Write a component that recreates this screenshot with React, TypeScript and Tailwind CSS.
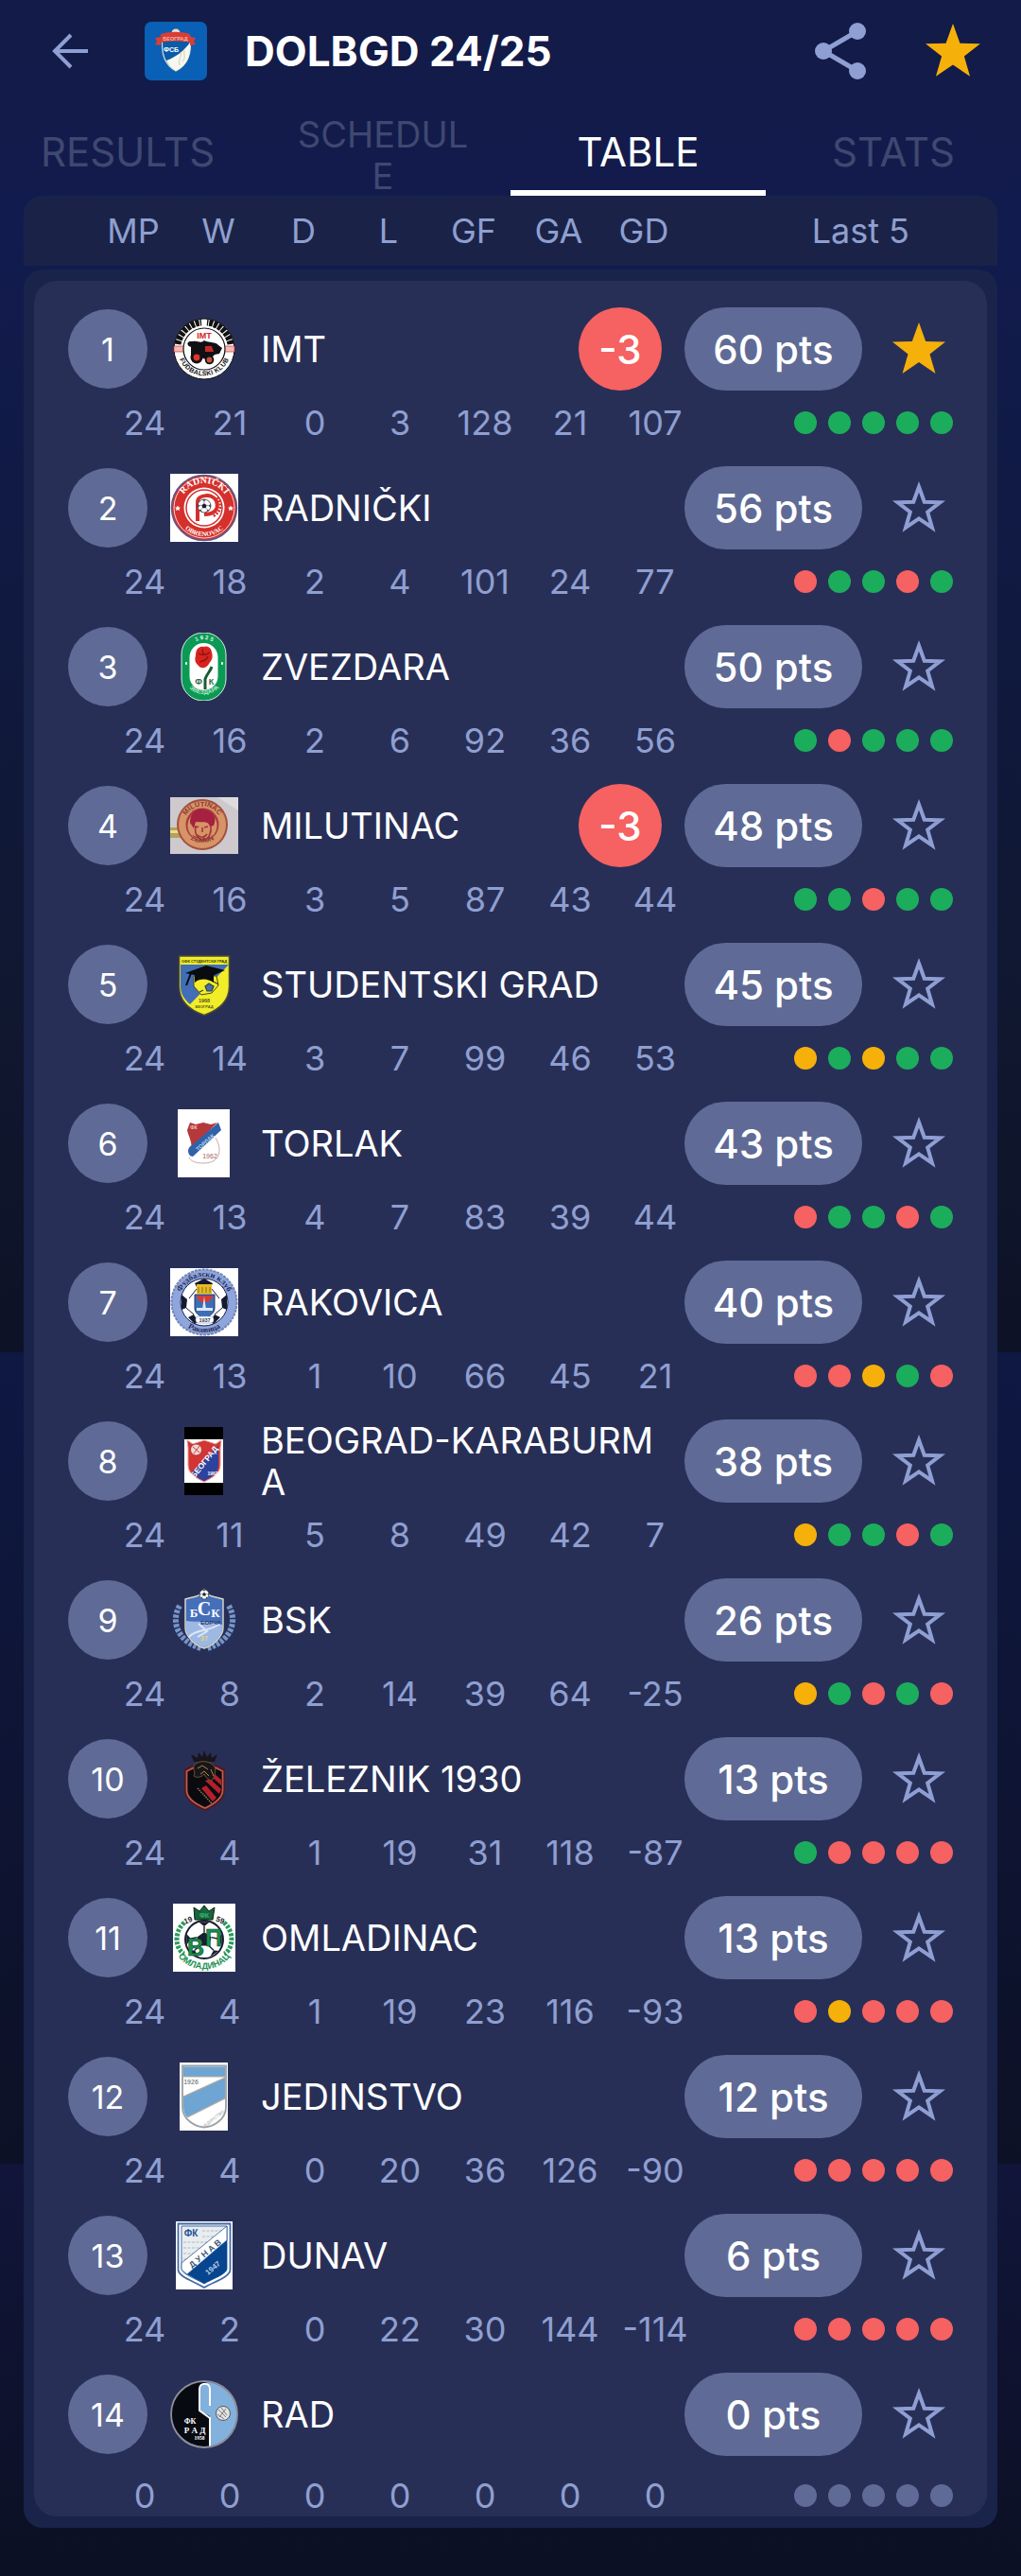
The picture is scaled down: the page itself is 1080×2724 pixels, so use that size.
import { ReactNode, useState } from "react";
import clsx from "clsx";

type Result = "W" | "D" | "L" | "-";

type Team = {
  name: string;
  points: number;
  penalty?: string;
  stats: number[];
  form: Result[];
  crest: ReactNode;
};

const STAR =
  "M30 2 L37.2 22 L58 22.6 L41.5 35.4 L47.5 56 L30 44 L12.5 56 L18.5 35.4 L2 22.6 L22.8 22 Z";

function Crest({ children }: { children: ReactNode }) {
  return (
    <svg viewBox="0 0 72 72" className="size-[72px] shrink-0" fontFamily="Liberation Sans, sans-serif" fontWeight="bold" textAnchor="middle" aria-hidden="true">
      {children}
    </svg>
  );
}

function Ball({ cx, cy, r }: { cx: number; cy: number; r: number }) {
  return (
    <g transform={`translate(${cx} ${cy}) scale(${r / 10})`}>
      <circle r="10" fill="#fff" stroke="#1b1d2e" strokeWidth="1" />
      <path d="M0-4 3.8-1.2 2.4 3.2-2.4 3.2-3.8-1.2Z M-3-9.4H3L0-7Z M9.4-3 9.4 3 7-.5Z M-9.4-3-9.4 3-7-.5Z M3 9.3 7.6 6 5 5.6Z M-3 9.3-7.6 6-5 5.6Z" fill="#1b1d2e" />
      <path d="M0-4V-7M3.8-1.2 7-.5M-3.8-1.2-7-.5M2.4 3.2 5 5.6M-2.4 3.2-5 5.6" stroke="#1b1d2e" strokeWidth=".7" />
    </g>
  );
}

const crests = {
  imt: (
    <Crest>
      <defs>
        <path id="imt-ring" d="M9.5 36a26.5 26.5 0 0 0 53 0" />
      </defs>
      <circle cx="36" cy="36" r="32" fill="#fff" stroke="#111" />
      <path d="M8 31A28 28 0 0 1 33 8" stroke="#111" strokeWidth="7" strokeDasharray="4 1" fill="none" />
      <path d="M64 31A28 28 0 0 0 39 8" stroke="#111" strokeWidth="7" strokeDasharray="4 1" fill="none" />
      <path d="M4 33h11v6H4zM57 33h11v6H57z" fill="#f3b9b4" stroke="#c33" strokeWidth=".7" />
      <circle cx="36" cy="36" r="22" fill="#fff" stroke="#111" strokeWidth="1.2" />
      <text x="36" y="25" fontSize="9" fill="#d92520">IMT</text>
      <path d="M22 34c-4-2-4-6 2-6 6-1 8 3 12-1 6 3 12 1 15 5l4 3-3 6-5 1-6 6-9-3-10-1z" fill="#101014" />
      <path d="M21 33c-4-3-1-5 3-4s6 3 10 0" stroke="#101014" strokeWidth="1.5" fill="none" />
      <path d="M37 33h7l2 6h-9z" fill="#c22b25" />
      <circle cx="28" cy="45" r="6.5" fill="#111" />
      <circle cx="28" cy="45" r="3.4" fill="#e2332d" />
      <circle cx="41.5" cy="47.5" r="4.8" fill="#111" />
      <circle cx="41.5" cy="47.5" r="2.9" fill="#c9533b" />
      <text fontSize="7" fill="#111">
        <textPath href="#imt-ring" startOffset="50%" dominantBaseline="middle">FUDBALSKI KLUB</textPath>
      </text>
    </Crest>
  ),
  radnicki: (
    <Crest>
      <defs>
        <path id="rad-top" d="M10 36a26 26 0 0 1 52 0" />
        <path id="rad-bot" d="M6 36a30 30 0 0 0 60 0" />
      </defs>
      <path d="M0 0h72v72H0z" fill="#fff" />
      <circle cx="36" cy="36" r="34.5" fill="#d5302c" stroke="#5a5a8c" strokeWidth="1.5" />
      <circle cx="36" cy="36" r="32" fill="none" stroke="#fff" strokeWidth=".8" />
      <circle cx="36" cy="36" r="21.5" fill="#fff" />
      <circle cx="36" cy="36" r="19" fill="none" stroke="#d5302c" strokeWidth="1.5" />
      <text fontSize="10" fill="#fff" fontFamily="Liberation Serif, serif">
        <textPath href="#rad-top" startOffset="50%">RADNIČKI</textPath>
      </text>
      <text fontSize="7" fill="#fff" fontFamily="Liberation Serif, serif">
        <textPath href="#rad-bot" startOffset="50%">OBRENOVAC</textPath>
      </text>
      <path d="M29 50V30c0-8 16-10 20-1 3 9-3 14-13 14" fill="none" stroke="#d5302c" strokeWidth="4" />
      <path d="M50 25c5 7 4 16-5 20" fill="none" stroke="#d5302c" strokeWidth="3" strokeDasharray="2 1.5" />
      <Ball cx={36} cy={34} r={7} />
      <path d="M8 33.5l1 2h2l-1.5 1.500.5 2-2-1-2 1 .5-2L5 35.500h2zM64 33.500l1 2h2l-1.500 1.500.5 2-2-1-2 1 .5-2-1.500-1.500h2z" fill="#fff" />
    </Crest>
  ),
  zvezdara: (
    <Crest>
      <defs>
        <path id="zv-top" d="M19 24a17 17 0 0 1 34 0" />
        <path id="zv-bot" d="M15 44c0 28 42 28 42 0" />
      </defs>
      <rect x="12" y="0" width="47" height="72" rx="23" fill="#0b9a54" stroke="#d8efe2" />
      <rect x="20.5" y="11" width="30" height="50" rx="15" fill="#fff" />
      <text fontSize="6" fill="#dff3e6"><textPath href="#zv-top" startOffset="50%">1 9 2 5</textPath></text>
      <text fontSize="6.5" fill="#b9e6cb"><textPath href="#zv-bot" startOffset="50%">ЗВЕЗДАРА</textPath></text>
      <path d="M17 32v1M55 32v1" stroke="#fff" strokeWidth="2" strokeLinecap="round" />
      <path d="M37 60V49c2-6 5-7 7-13" stroke="#1c5b33" strokeWidth="3" fill="none" />
      <path d="M27 24c0-8 5-10 9-9 5-2 8 3 8 6 2 6-1 9-3 12-4 6-9 5-12 1-3-3-3-6-2-10z" fill="#d8231f" />
      <path d="M30 22c5 3 9 1 12-1M31 31c4-1 8-2 9-6M35 17c-2 3-1 5 2 7" stroke="#8d1512" fill="none" strokeWidth="1.2" />
      <text x="30" y="55" fontSize="9" fill="#33684a">Ф</text>
      <text x="43.5" y="55" fontSize="9" fill="#33684a">К</text>
    </Crest>
  ),
  milutinac: (
    <Crest>
      <defs>
        <path id="mi-top" d="M14.500 35a19.500 19.500 0 0 1 39 0" />
        <path id="mi-bot" d="M9.5 34a25 25 0 0 0 49 0" />
      </defs>
      <path d="M0 6h72v60H0z" fill="#cdc9cd" />
      <path d="M0 6h72v14L50 6z" fill="#dedbde" />
      <path d="M0 38h12v11H0z" fill="#b5a25b" />
      <path d="M0 41h12v3H0z" fill="#e6dc94" />
      <circle cx="34" cy="35" r="27" fill="#a4503f" />
      <circle cx="34" cy="35" r="25" fill="#d79467" />
      <circle cx="34" cy="35" r="17.5" fill="#a63a3e" />
      <circle cx="34" cy="36" r="15.5" fill="#d79467" />
      <path d="M21 33c0-12 9-16 15-14 9 1 14 9 10 17l-4 1c-2-7-7-4-15-5l-2 7z" fill="#a5213f" />
      <path d="M27 38l3-1M36 38l4-1M34 38v5M29 46c4 4 8 2 10-1M27 36c-2 9 3 15 8 15 6 0 9-8 8-15" stroke="#a5323c" strokeWidth="1.6" fill="none" />
      <text fontSize="7.5" fill="#8e3b37"><textPath href="#mi-top" startOffset="50%">MILUTINAC</textPath></text>
      <text fontSize="7.5" fill="#8e3b37"><textPath href="#mi-bot" startOffset="50%">ZEMUN</textPath></text>
    </Crest>
  ),
  studentski: (
    <Crest>
      <path d="M9.5 6h53v32c0 17-14 26-26.5 30.5C23 64 9.500 55 9.500 38z" fill="#f1ed29" stroke="#4b4d36" strokeWidth="1.5" />
      <path d="M11 15h51L21 57c-7-6-10-12-10-19z" fill="#416eb6" />
      <path d="M11 7h50v7H11z" fill="#f1ed29" />
      <text x="36" y="12.5" fontSize="4" fill="#33331b">ОФК СТУДЕНТСКИ ГРАД</text>
      <path d="M25 27h24l2 10-7 8-11 2-8-9z" fill="#f1ed29" stroke="#46491e" />
      <path d="M37 38l4-3 5 3-2 5h-5zM46 33l5 3M31 44l4-2" stroke="#35423b" strokeWidth="1.2" fill="#416eb6" />
      <path d="M16 24l22-8 20 5-18 8z" fill="#0a0b0e" />
      <path d="M26 26v8c6-5 14-4 20 0v-8z" fill="#0a0b0e" />
      <path d="M22 24l-5 13" stroke="#0a0b0e" strokeWidth="2" />
      <text x="36" y="55" fontSize="5.5" fill="#595a1a">1968</text>
      <text x="36" y="61" fontSize="4" fill="#595a1a">БЕОГРАД</text>
    </Crest>
  ),
  torlak: (
    <Crest>
      <path d="M8 0h55v72H8z" fill="#fff" />
      <path d="M48 30c7 12 6 27-13 27-8 0-13-2-15-6" fill="#fff" stroke="#c9a8a4" />
      <path d="M21 14l6 2 8-2 8 2 7-2-28 28c2-7-3-14-4-20z" fill="#b5393a" />
      <path d="M51 14l3 8L24 50c-3 0-5-3-5-6 0-3 2-5 4-6z" fill="#2f62a9" />
      <text x="25" y="21" fontSize="5" fill="#f0c9c5">ФК</text>
      <text x="37" y="37" fontSize="6" fill="#b9d0ed" transform="rotate(-42 37 35)">ТОРЛАК</text>
      <text x="42" y="52" fontSize="7" fill="#a7605c" fontWeight="normal">1962</text>
    </Crest>
  ),
  rakovica: (
    <Crest>
      <defs>
        <path id="ra-top" d="M9 36a27 27 0 0 1 54 0" />
        <path id="ra-bot" d="M4 36a32 32 0 0 0 64 0" />
      </defs>
      <path d="M0 0h72v72H0z" fill="#fff" />
      <circle cx="36" cy="36" r="34.5" fill="#8fa5dd" stroke="#7285b6" strokeWidth="2" strokeDasharray="3 1" />
      <circle cx="36" cy="36" r="25" fill="#fff" stroke="#1c2344" />
      <path d="M36 11l9 5-3 6H29l-3-6zM12 28l6 5-1 9-5 2zM60 28l-6 5 1 9 5 2zM19 52l6-3 5 8-4 2zM53 52l-6-3-5 8 4 2z" fill="#141a33" />
      <path d="M20 32l8-10M52 32l-8-10M17 42l8 7M55 42l-8 7" stroke="#141a33" />
      <text fontSize="8.5" fill="#252d58" fontFamily="Liberation Serif, serif"><textPath href="#ra-top" startOffset="50%">Фудбалски клуб</textPath></text>
      <text fontSize="8.5" fill="#252d58" fontFamily="Liberation Serif, serif"><textPath href="#ra-bot" startOffset="50%">Раковица</textPath></text>
      <path d="M28 17h16v10H28z" fill="#e6bb23" />
      <path d="M30 20v6M34 20v6M38 20v6M42 20v6" stroke="#8c6d10" />
      <path d="M26 28h21v14c0 6-5 8-10.5 12C31 50 26 48 26 42z" fill="#3a6fb7" stroke="#243266" />
      <path d="M27 29h19l-5 7h-9z" fill="#cf3d3a" />
      <path d="M36 30l2 14h-4zM28 42h17v3H28z" fill="#dfe7f4" />
      <rect x="27" y="51" width="19" height="7" rx="3" fill="#fff" stroke="#8795b8" strokeWidth=".6" />
      <text x="36.5" y="57" fontSize="5.5" fill="#323b60">1937</text>
    </Crest>
  ),
  beograd: (
    <Crest>
      <path d="M15 0h41v72H15z" fill="#000" />
      <path d="M15 13h41v46H15z" fill="#fff" />
      <path d="M18 14l6 4 12-4 12 4 6-4-1 8v18c0 10-10 14-17 18-8-4-17-8-17-18V22z" fill="#d23534" stroke="#e59b96" />
      <path d="M51 20v20c0 9-8 13-15 17-6-3-10-5-13-9z" fill="#2b439f" />
      <circle cx="27.5" cy="24" r="6" fill="#f4d6d4" stroke="#9e2c2c" strokeWidth=".8" />
      <path d="M24 21l7 6M31 20l-6 8" stroke="#c9403d" />
      <text x="36" y="40" fontSize="8.5" fill="#fff" transform="rotate(-51 36 37)">БЕОГРАД</text>
      <text x="45" y="51" fontSize="5" fill="#fff">1962</text>
    </Crest>
  ),
  bsk: (
    <Crest>
      <path d="M10 21C1 36 6 58 33 66M62 21c9 15 4 37-23 45" stroke="#7795c9" strokeWidth="6" strokeDasharray="3.5 1.5" fill="none" />
      <path d="M36 4c5 9 13 7 20 10v30c0 10-11 19-20 22-9-3-20-12-20-22V14c7-3 15-1 20-10z" fill="#466fba" stroke="#d5d6c6" strokeWidth="1.5" />
      <path d="M17 37c12 2 26-1 38 4v4c0 10-11 17-19 20-8-3-19-10-19-20z" fill="#9db8e3" />
      <path d="M20 54c8-9 18-4 33-14M30 40l9 8-10 6" stroke="#dce6f8" strokeWidth="2" fill="none" />
      <Ball cx={36} cy={9} r={5} />
      <text x="25" y="33" fontSize="13" fill="#fff" fontFamily="Liberation Serif, serif">Б</text>
      <text x="36" y="31" fontSize="20" fill="#fff" fontFamily="Liberation Serif, serif">С</text>
      <text x="48" y="33" fontSize="13" fill="#fff" fontFamily="Liberation Serif, serif">К</text>
      <text x="43" y="41" fontSize="6" fill="#233569">БОРЧА</text>
      <text x="36" y="58" fontSize="7" fill="#e1d579">37</text>
    </Crest>
  ),
  zeleznik: (
    <Crest>
      <path d="M25 18l-3-8 7 4 1-6 4 5 2-7 3 7 4-5 1 6 6-4-3 8z" fill="#17151b" />
      <path d="M15 26l9-5h24l10 5v22c0 10-10 17-21 22-12-5-22-12-22-22z" fill="#53161d" />
      <path d="M17.5 28l8-4h22l8 4v20c0 8-8 14-18.5 19-12-5-19.500-11-19.500-19z" fill="#0b0b0f" stroke="#c05a50" strokeWidth="1.8" />
      <path d="M42 36l12 11-2 5-15-14zM46 30l8 7v6L43 33zM38 43l11 13-4 4-12-14z" fill="#b51f2b" />
      <path d="M25 22c5-6 16-6 22 1 2 5 0 11-3 15-4-1-7-4-8-7-4 4-8 4-11 2 2-4-1-7 0-11z" fill="#19161a" stroke="#6a5530" strokeWidth="1" />
      <path d="M29 25l5-3 6 4M32 31l4-3 5 5M43 26l3 7" stroke="#a78449" fill="none" />
      <path d="M29 46l15 16" stroke="#8e7d6b" strokeWidth="1.5" strokeDasharray="1.5 1" />
    </Crest>
  ),
  omladinac: (
    <Crest>
      <defs>
        <path id="om-bot" d="M8 55c13 19 43 19 56 0" />
      </defs>
      <path d="M3 0h66v72H3z" fill="#fff" />
      <path d="M15 20C2 32 7 50 15 53M57 20c13 12 8 30 0 33" stroke="#2b9a5c" strokeWidth="5" strokeDasharray="3 1.5" fill="none" />
      <Ball cx={36} cy={38} r={20} />
      <path d="M26 17L25 4l6 4 5-6 5 6 6-4-2 13z" fill="#17663c" stroke="#0c1f14" />
      <text x="36" y="15" fontSize="7" fill="#35b36d">ФК</text>
      <text x="20" y="20" fontSize="8" fill="#222" transform="rotate(-22 20 20)">19</text>
      <text x="52" y="20" fontSize="8" fill="#222" transform="rotate(22 52 20)">59</text>
      <text x="27" y="55" fontSize="25" fill="#169150" stroke="#0d3a22" strokeWidth=".6">В</text>
      <text x="46" y="45" fontSize="25" fill="#169150" stroke="#0d3a22" strokeWidth=".6">П</text>
      <text fontSize="9.5" fill="#1f9156"><textPath href="#om-bot" startOffset="50%">ОМЛАДИНАЦ</textPath></text>
    </Crest>
  ),
  jedinstvo: (
    <Crest>
      <path d="M10 0h51v72H10z" fill="#fdfdfc" />
      <path d="M13 3.5h46V47c0 14-14 21-23 21.5C27 68 13 61 13 47z" fill="#fff" stroke="#9ca0a6" strokeWidth="1.8" />
      <path d="M14 4.500h44V15H14zM14 36l44-20v22L18 58c-3-4-4-7-4-12z" fill="#6fa5d2" />
      <path d="M14 15h44M14 36l44-20M18 58l40-20" stroke="#b3a99e" strokeWidth="1.2" />
      <text x="22" y="23" fontSize="7" fill="#8a8f94">1926</text>
      <text x="46" y="61" fontSize="4.5" fill="#9d9fa2" fontWeight="normal" transform="rotate(-38 46 60)">ЈЕДИНСТВО</text>
    </Crest>
  ),
  dunav: (
    <Crest>
      <path d="M6 0h60v72H6z" fill="#fff" />
      <path d="M8.5 2.500h55V51c0 8-18 13-27.500 19C27 64 8.500 59 8.500 51z" fill="#fff" stroke="#416aa5" strokeWidth="1.8" />
      <path d="M12 5h48v45c0 6-16 11-24 16-8-5-24-10-24-16z" fill="#e9edef" stroke="#416aa5" />
      <path d="M14 22h34M14 28h28M14 34h22M14 40h15M34 10h24M34 16h20" stroke="#adbcc4" strokeWidth="1.2" strokeDasharray="3 1.5" />
      <path d="M60 5v15L18 56l-6-5v-7z" fill="#fff" stroke="#2a5596" strokeWidth=".8" />
      <path d="M60 20v30c0 6-16 11-24 16-6-4-13-7-18-10z" fill="#08458f" />
      <text x="22" y="16" fontSize="10" fill="#245293">ФК</text>
      <text x="37" y="37" fontSize="9" fill="#405a7a" transform="rotate(-40 37 34)">Д У Н А В</text>
      <text x="45" y="52" fontSize="8" fill="#b9d0eb" transform="rotate(-40 45 49)">1947</text>
    </Crest>
  ),
  rad: (
    <Crest>
      <circle cx="36" cy="36" r="34.5" fill="#82b1de" />
      <path d="M42 1C16-2 1 16 1.5 36S18 71 42 71V38L31 32V9c0-6 8-6 11-8z" fill="#080a12" />
      <path d="M31 9v23l11 8v31M31 9c0-7 11-7 11 0v18" fill="none" stroke="#fff" strokeWidth="2" />
      <circle cx="36" cy="36" r="35" fill="none" stroke="#8d8f9b" strokeWidth="1.8" />
      <circle cx="56" cy="35" r="7.5" fill="#e4e4e2" stroke="#54585e" />
      <path d="M51 31l8 8M54 29l6 8M50 36l7 5M52 39l7-9" stroke="#7b7e82" fill="none" />
      <g fill="#fff" fontFamily="Liberation Serif, serif">
        <text x="21" y="46" fontSize="8">ФК</text>
        <text x="26" y="56" fontSize="9">Р А Д</text>
        <text x="31" y="63" fontSize="5.5">1958</text>
      </g>
    </Crest>
  ),
};

const teams: Team[] = [
  { name: "IMT", points: 60, penalty: "-3", stats: [24, 21, 0, 3, 128, 21, 107], form: ["W", "W", "W", "W", "W"], crest: crests.imt },
  { name: "RADNIČKI", points: 56, stats: [24, 18, 2, 4, 101, 24, 77], form: ["L", "W", "W", "L", "W"], crest: crests.radnicki },
  { name: "ZVEZDARA", points: 50, stats: [24, 16, 2, 6, 92, 36, 56], form: ["W", "L", "W", "W", "W"], crest: crests.zvezdara },
  { name: "MILUTINAC", points: 48, penalty: "-3", stats: [24, 16, 3, 5, 87, 43, 44], form: ["W", "W", "L", "W", "W"], crest: crests.milutinac },
  { name: "STUDENTSKI GRAD", points: 45, stats: [24, 14, 3, 7, 99, 46, 53], form: ["D", "W", "D", "W", "W"], crest: crests.studentski },
  { name: "TORLAK", points: 43, stats: [24, 13, 4, 7, 83, 39, 44], form: ["L", "W", "W", "L", "W"], crest: crests.torlak },
  { name: "RAKOVICA", points: 40, stats: [24, 13, 1, 10, 66, 45, 21], form: ["L", "L", "D", "W", "L"], crest: crests.rakovica },
  { name: "BEOGRAD-KARABURMA", points: 38, stats: [24, 11, 5, 8, 49, 42, 7], form: ["D", "W", "W", "L", "W"], crest: crests.beograd },
  { name: "BSK", points: 26, stats: [24, 8, 2, 14, 39, 64, -25], form: ["D", "W", "L", "W", "L"], crest: crests.bsk },
  { name: "ŽELEZNIK 1930", points: 13, stats: [24, 4, 1, 19, 31, 118, -87], form: ["W", "L", "L", "L", "L"], crest: crests.zeleznik },
  { name: "OMLADINAC", points: 13, stats: [24, 4, 1, 19, 23, 116, -93], form: ["L", "D", "L", "L", "L"], crest: crests.omladinac },
  { name: "JEDINSTVO", points: 12, stats: [24, 4, 0, 20, 36, 126, -90], form: ["L", "L", "L", "L", "L"], crest: crests.jedinstvo },
  { name: "DUNAV", points: 6, stats: [24, 2, 0, 22, 30, 144, -114], form: ["L", "L", "L", "L", "L"], crest: crests.dunav },
  { name: "RAD", points: 0, stats: [0, 0, 0, 0, 0, 0, 0], form: ["-", "-", "-", "-", "-"], crest: crests.rad },
];

const columns = ["MP", "W", "D", "L", "GF", "GA", "GD"];

const formColor = {
  W: "bg-[#1cad5c]",
  D: "bg-[#f5b00a]",
  L: "bg-[#f66161]",
  "-": "bg-[#5f6b96]",
};

const tabs = [
  { label: "RESULTS", size: "text-[42px]" },
  { label: "SCHEDULE", size: "text-[38px]" },
  { label: "TABLE", size: "text-[42px]" },
  { label: "STATS", size: "text-[42px]" },
];

function LeagueLogo() {
  return (
    <svg viewBox="0 0 66 62" className="h-[62px] w-[66px] shrink-0" aria-hidden="true">
      <rect width="66" height="62" rx="7" fill="#0a60b4" />
      <path d="M19 16h29c2 16-1 29-15 36C20 45 17 32 19 16z" fill="#0a5ba8" stroke="#d9dccb" strokeWidth="1.2" />
      <path d="M48 22c1 14-3 24-15 30-5-3-8-7-10-11 11-4 18-10 25-19z" fill="#f7f7f1" />
      <circle cx="33" cy="12" r="4.5" fill="#eedfc4" />
      <path d="M11 17l6-1v-3c10-3 21-3 31 0v3l6 1-2 4 2 3-6 1v-3c-10-2-21-2-31 0v3l-6-1 2-3z" fill="#d83e36" />
      <text x="32.5" y="20" fontSize="5.5" fontWeight="bold" fill="#f3b6a9" textAnchor="middle" fontFamily="Liberation Sans, sans-serif">БЕОГРАД</text>
      <text x="28" y="32" fontSize="7" fontWeight="bold" fill="#fff" textAnchor="middle" fontFamily="Liberation Sans, sans-serif">ФСБ</text>
      <path d="M38 32c2 4-3 8-1 14M42 30c-1 5 2 7-2 12" stroke="#d8cdb0" fill="none" />
    </svg>
  );
}

function TeamRow({ team, position }: { team: Team; position: number }) {
  const [favourite, setFavourite] = useState(position === 1);

  return (
    <tr className="group flex flex-wrap items-center px-9">
      <th scope="row" className="flex h-[88px] w-full items-center font-normal">
        <span className="flex size-[84px] shrink-0 items-center justify-center rounded-full bg-[#5f6b96] text-[34px] text-white">
          {position}
        </span>
        <span className="ml-6">{team.crest}</span>
        <span className="ml-6 flex-1 break-all text-left text-[38px] leading-[44px] text-white">
          {team.name}
        </span>
        {team.penalty && (
          <span className="flex size-[88px] shrink-0 items-center justify-center rounded-full bg-[#f66161] text-[42px] font-medium text-white">
            {team.penalty}
          </span>
        )}
        <span className="ml-6 flex h-[88px] w-[188px] shrink-0 items-center justify-center rounded-full bg-[#5f6b96] text-[42px] font-medium text-white">
          {team.points} pts
        </span>
        <button
          type="button"
          aria-label="Favourite"
          aria-pressed={favourite}
          onClick={() => setFavourite(!favourite)}
          className="ml-6 flex w-[72px] shrink-0 justify-center"
        >
          <svg viewBox="0 0 60 60" className="size-[60px]">
            {favourite ? (
              <path d={STAR} fill="#f5b00a" />
            ) : (
              <path d={STAR} transform="translate(6 6.2) scale(.8)" fill="none" stroke="#8f9fd3" strokeWidth="5" strokeMiterlimit="10" />
            )}
          </svg>
        </button>
      </th>
      {team.stats.map((value, i) => (
        <td
          key={columns[i]}
          className="mt-3 w-[90px] text-center text-[36px] leading-[44px] text-[#8f9fd0] first-of-type:ml-9 group-last:mt-5"
        >
          {value}
        </td>
      ))}
      <td className="mt-3 ml-auto flex gap-3 group-last:mt-5">
        {team.form.map((result, i) => (
          <span key={i} className={clsx("size-6 rounded-full", formColor[result])} />
        ))}
      </td>
    </tr>
  );
}

export default function App() {
  const [active, setActive] = useState("TABLE");

  return (
    <main className="min-h-screen w-full bg-[linear-gradient(to_bottom,#131b47_0%,#121b4e_9%,#101a42_22%,#10172f_40%,#0d1226_52.5%,#0e1843_52.5%,#0e1536_66%,#0d1126_84%,#11153a_84%,#0c1024_100%)] px-[25px] pb-12 font-['Inter',sans-serif]">
      <header className="flex h-[108px] items-center pl-7 pr-4">
        <button type="button" aria-label="Back">
          <svg viewBox="0 0 44 44" className="size-11" fill="none" stroke="#8f9fd3" strokeWidth="4">
            <path d="M40 22H6M22 5 5 22l17 17" />
          </svg>
        </button>
        <span className="ml-14"><LeagueLogo /></span>
        <h1 className="ml-10 flex-1 text-[44px] leading-[52px] font-bold text-white">DOLBGD 24/25</h1>
        <button type="button" aria-label="Share">
          <svg viewBox="0 0 56 62" className="h-[62px] w-14" fill="#8f9fd3">
            <path d="M46 10 10 31l36 21" stroke="#8f9fd3" strokeWidth="5" fill="none" />
            <circle cx="46" cy="10" r="9" />
            <circle cx="10" cy="31" r="9" />
            <circle cx="46" cy="52" r="9" />
          </svg>
        </button>
        <button type="button" aria-label="Favourite league" className="ml-[60px]">
          <svg viewBox="0 0 60 60" className="size-[62px]">
            <path d={STAR} fill="#f5b00a" />
          </svg>
        </button>
      </header>

      <nav className="-mx-[25px] flex h-[99px] items-stretch">
        {tabs.map((tab) => (
          <button
            key={tab.label}
            type="button"
            onClick={() => setActive(tab.label)}
            className={clsx(
              "min-w-0 flex-1 break-all border-b-[6px] px-9 pt-3 leading-[44px]",
              tab.size,
              active === tab.label ? "border-white text-white" : "border-transparent text-[#3f4870]"
            )}
          >
            {tab.label}
          </button>
        ))}
      </nav>

      <table className="block w-full">
        <thead className="block rounded-t-[20px] bg-[#1a2347]">
          <tr className="flex h-[74px] items-center pl-[71px] pr-[93px] text-[36px] text-[#8f9fd0]">
            {columns.map((column) => (
              <th key={column} scope="col" className="w-[90px] text-center font-normal">
                {column}
              </th>
            ))}
            <th scope="col" className="ml-auto font-normal">
              Last 5
            </th>
          </tr>
        </thead>
        <tbody className="mt-1 block rounded-[20px] bg-[#1a2349] px-[11px] py-3">
          <tr className="block">
            <td className="block rounded-[24px] bg-[#282f57] pt-7">
              <table className="block w-full">
                <tbody className="flex flex-col gap-6">
                  {teams.map((team, i) => (
                    <TeamRow key={team.name} team={team} position={i + 1} />
                  ))}
                </tbody>
              </table>
            </td>
          </tr>
        </tbody>
      </table>
    </main>
  );
}
